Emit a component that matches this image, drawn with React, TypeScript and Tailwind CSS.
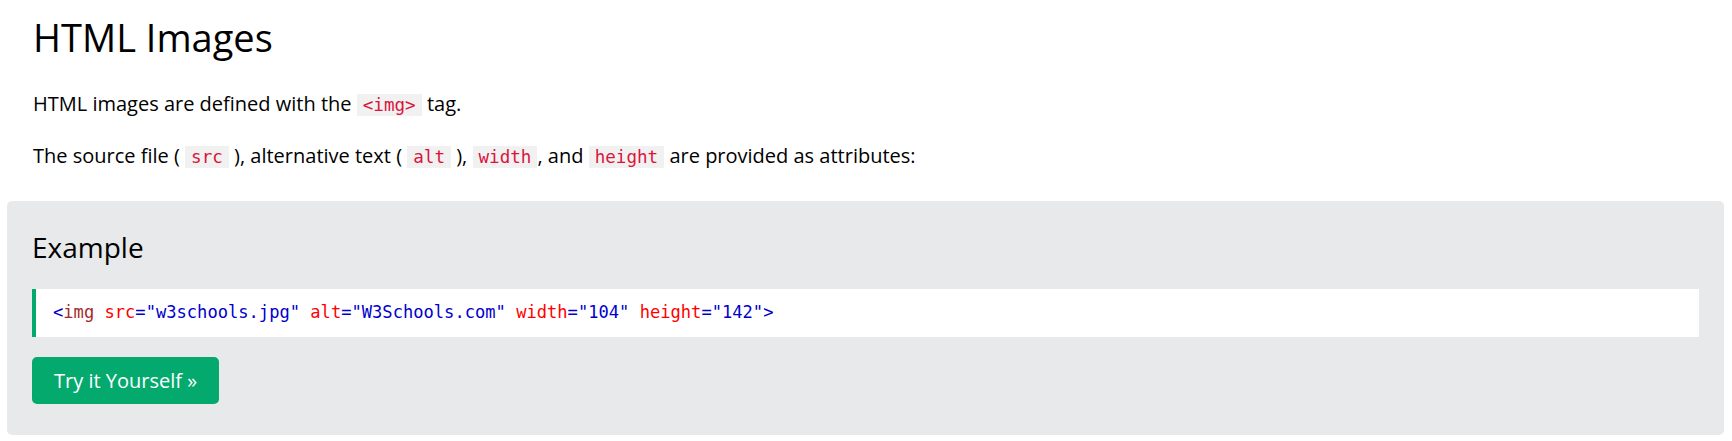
const sans = "font-['Open_Sans',sans-serif]";
const mono = "font-['DejaVu_Sans_Mono',monospace]";

function Code({ children }: { children: string }) {
  return (
    <code className={`${mono} text-[17.6px] text-[#DC143C] bg-[#F1F1F1] px-[6px] py-[1px]`}>
      {children}
    </code>
  );
}

export default function App() {
  return (
    <div className={`w-[1732px] h-[441px] bg-white text-black ${sans}`}>
      <div className="px-[33px] pt-[14px]">
        <h1 className="text-[38px] leading-[46px] font-normal">HTML Images</h1>
        <p className="mt-[30px] text-[20px] leading-[28px]">
          HTML images are defined with the <Code>{"<img>"}</Code> tag.
        </p>
        <p className="mt-[23px] text-[20px] leading-[28px]">
          The source file ( <Code>src</Code> ), alternative text ( <Code>alt</Code> ),{" "}
          <Code>width</Code>, and <Code>height</Code> are provided as attributes:
        </p>
      </div>

      <div className="mt-[30px] ml-[7px] mr-[8px] rounded-[5px] bg-[#E7E9EB] px-[25px] pt-[29px] pb-[31px]">
        <h2 className="text-[28px] leading-[34px] font-normal">Example</h2>
        <div className="mt-[25px] h-[48px] flex items-center bg-white border-l-4 border-[#04AA6D] pl-[17px]">
          <span className={`${mono} text-[17.1px] whitespace-pre`}>
            <span className="text-[#0000CD]">&lt;</span>
            <span className="text-[#A52A2A]">img</span>
            <span className="text-[#FF0000]"> src</span>
            <span className="text-[#0000CD]">="w3schools.jpg"</span>
            <span className="text-[#FF0000]"> alt</span>
            <span className="text-[#0000CD]">="W3Schools.com"</span>
            <span className="text-[#FF0000]"> width</span>
            <span className="text-[#0000CD]">="104"</span>
            <span className="text-[#FF0000]"> height</span>
            <span className="text-[#0000CD]">="142"&gt;</span>
          </span>
        </div>
        <button className="mt-[20px] h-[47px] px-[22px] rounded-[5px] bg-[#04AA6D] text-white text-[20px]">
          Try it Yourself &raquo;
        </button>
      </div>
    </div>
  );
}
